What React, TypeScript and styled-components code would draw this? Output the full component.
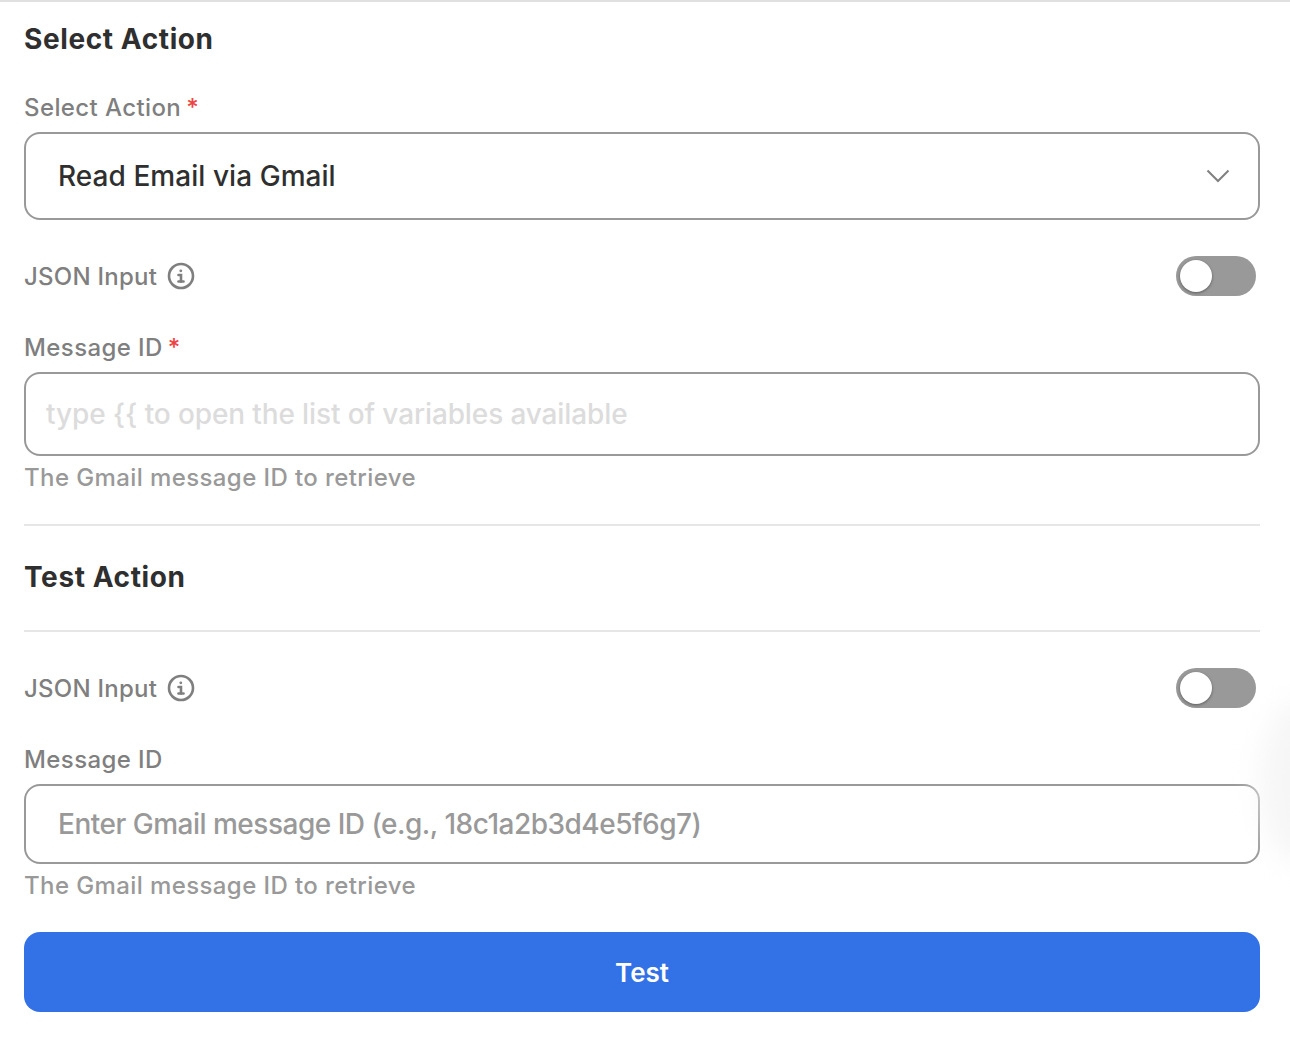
// @ts-nocheck
import styled, { createGlobalStyle } from 'styled-components';

const GlobalStyle = createGlobalStyle`
  html, body {
    margin: 0;
    padding: 0;
    background: #fff;
    font-family: Inter, "Open Sans", sans-serif;
    overflow: hidden;
  }
  * { box-sizing: border-box; }
`;

const Page = styled.div`
  position: relative;
  width: 1290px;
  height: 1042px;
  border-top: 2px solid #e0e0e0;
  padding: 0 30px 0 24px;
  overflow: hidden;
`;

const Glow = styled.div`
  position: absolute;
  right: -50px;
  top: 700px;
  width: 80px;
  height: 160px;
  border-radius: 50%;
  background: #f6f6f6;
  filter: blur(14px);
`;

const Heading = styled.h2`
  margin: 0;
  height: 38px;
  font-size: 28px;
  line-height: 38px;
  font-weight: 700;
  color: #2f2f2f;
  letter-spacing: 0.6px;
`;

const Label = styled.label`
  display: block;
  height: 30px;
  font-size: 24px;
  line-height: 30px;
  font-weight: 500;
  color: #7f7f7f;
  letter-spacing: 0.4px;
`;

const Required = styled.span`
  color: #ef4444;
  margin-left: 5px;
`;

const SelectBox = styled.div`
  display: flex;
  align-items: center;
  justify-content: space-between;
  height: 88px;
  margin-top: 9px;
  padding: 0 28px 0 32px;
  border: 2px solid #999;
  border-radius: 16px;
  font-size: 28px;
  font-weight: 500;
  color: #2f2f2f;
  letter-spacing: 0.05px;
`;

const TextBox = styled.div<{ $height: number; $pad: number; $spacing: number; $faint?: boolean }>`
  display: flex;
  align-items: center;
  height: ${({ $height }) => $height}px;
  margin-top: 9px;
  padding-left: ${({ $pad }) => $pad}px;
  border: 2px solid #999;
  border-radius: 16px;
  font-size: 28px;
  font-weight: 500;
  color: ${({ $faint }) => ($faint ? '#dcdcdc' : '#999')};
  letter-spacing: ${({ $spacing }) => $spacing}px;
`;

const Hint = styled.div`
  height: 30px;
  margin-top: 7px;
  font-size: 24px;
  line-height: 30px;
  font-weight: 500;
  color: #999;
  letter-spacing: 0.4px;
`;

const ToggleRow = styled.div<{ $top: number }>`
  display: flex;
  align-items: center;
  justify-content: space-between;
  height: 40px;
  margin-top: ${({ $top }) => $top}px;
  padding-right: 4px;
`;

const ToggleLabel = styled.div`
  display: flex;
  align-items: center;
  gap: 10px;
  font-size: 24px;
  font-weight: 500;
  color: #7f7f7f;
  letter-spacing: 0.25px;
`;

const Track = styled.div`
  position: relative;
  width: 80px;
  height: 40px;
  border-radius: 20px;
  background: #999;
`;

const Knob = styled.div`
  position: absolute;
  left: 4px;
  top: 4px;
  width: 32px;
  height: 32px;
  border-radius: 50%;
  background: #fff;
  box-shadow: 0 1px 3px rgba(0, 0, 0, 0.4);
`;

const Divider = styled.div<{ $top: number }>`
  height: 2px;
  margin-top: ${({ $top }) => $top}px;
  background: #e6e6e6;
`;

const Block = styled.div<{ $top: number }>`
  margin-top: ${({ $top }) => $top}px;
`;

const TestButton = styled.button`
  display: block;
  width: 100%;
  height: 80px;
  margin-top: 31px;
  border: 0;
  border-radius: 16px;
  background: #3371e6;
  color: #fff;
  font-family: inherit;
  font-size: 26px;
  font-weight: 600;
`;

const InfoIcon = () => (
  <svg width="28" height="28" viewBox="0 0 28 28" fill="none" stroke="#7f7f7f" strokeWidth="2.6" strokeLinecap="round">
    <circle cx="14" cy="14" r="12" />
    <path d="M11.5 13h2.5v6.5" />
    <path d="M11.5 19.5h5" />
    <circle cx="13.8" cy="8.8" r="0.6" fill="#7f7f7f" strokeWidth="1.6" />
  </svg>
);

const Chevron = () => (
  <svg width="24" height="14" viewBox="0 0 24 14" fill="none" stroke="#808080" strokeWidth="2">
    <path d="M1.5 1.5 12 12 22.5 1.5" />
  </svg>
);

const JsonToggle = ({ top }: { top: number }) => (
  <ToggleRow $top={top}>
    <ToggleLabel>
      JSON Input
      <InfoIcon />
    </ToggleLabel>
    <Track>
      <Knob />
    </Track>
  </ToggleRow>
);

export default function App() {
  return (
    <Page>
      <GlobalStyle />
      <Glow />
      <Block $top={18}>
        <Heading>Select Action</Heading>
      </Block>
      <Block $top={35}>
        <Label>
          Select Action<Required>*</Required>
        </Label>
        <SelectBox>
          Read Email via Gmail
          <Chevron />
        </SelectBox>
      </Block>
      <JsonToggle top={36} />
      <Block $top={37}>
        <Label>
          Message ID<Required>*</Required>
        </Label>
        <TextBox $height={84} $pad={20} $spacing={-0.12} $faint>
          type {'{{'} to open the list of variables available
        </TextBox>
        <Hint>The Gmail message ID to retrieve</Hint>
      </Block>
      <Divider $top={31} />
      <Block $top={32}>
        <Heading>Test Action</Heading>
      </Block>
      <Divider $top={34} />
      <JsonToggle top={36} />
      <Block $top={37}>
        <Label>Message ID</Label>
        <TextBox $height={80} $pad={32} $spacing={-0.5}>
          Enter Gmail message ID (e.g., 18c1a2b3d4e5f6g7)
        </TextBox>
        <Hint>The Gmail message ID to retrieve</Hint>
      </Block>
      <TestButton>Test</TestButton>
    </Page>
  );
}
